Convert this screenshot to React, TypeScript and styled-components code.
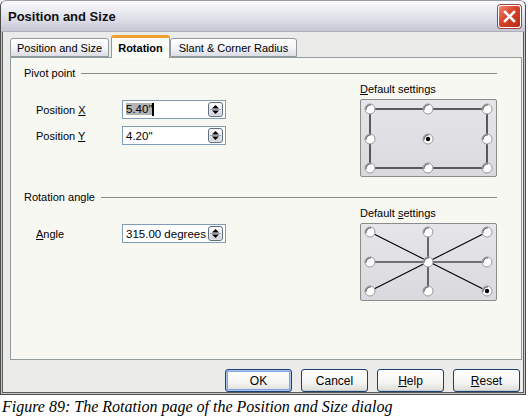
import React from "react";
import styled, { createGlobalStyle } from "styled-components";

const Global = createGlobalStyle`
  html, body { margin: 0; padding: 0; background: #ffffff; }
  body { font-family: "Liberation Sans", Arial, sans-serif; font-size: 11px; color: #000; }
  * { box-sizing: border-box; }
`;

const Page = styled.div`
  width: 530px;
  height: 420px;
  display: flex;
  flex-direction: column;
  background: #fff;
`;

const Window = styled.div`
  width: 526px;
  height: 395px;
  display: flex;
  flex-direction: column;
  border: 1px solid #4a4a4a;
  border-top-color: #9a9aa6;
  border-radius: 6px 6px 0 0;
  background: #ebebe9;
  box-shadow: inset 0 0 0 1px #c8c8cc, inset 0 0 0 2px #5a5a5a;
  overflow: hidden;
`;

const TitleBar = styled.div`
  height: 31px;
  flex: none;
  display: flex;
  align-items: center;
  justify-content: space-between;
  padding: 0 4px 0 7px;
  background: linear-gradient(#fbfbfd 0%, #eaeaf1 35%, #d9d9e4 70%, #c6c6d4 100%);
  border-bottom: 1px solid #b0b0bc;
`;

const Title = styled.span`
  font-family: "Liberation Sans", Arial, sans-serif;
  font-weight: bold;
  font-size: 13px;
  color: #111;
`;

const CloseButton = styled.div`
  width: 23px;
  height: 23px;
  border-radius: 3px;
  border: 1px solid #ffffff;
  box-shadow: 0 0 0 1px #a04040;
  background: linear-gradient(135deg, #f08a70 0%, #d8432a 45%, #b62814 100%);
  display: flex;
  align-items: center;
  justify-content: center;
`;

const Body = styled.div`
  flex: 1;
  display: flex;
  flex-direction: column;
  padding: 3px 4px 0 9px;
`;

const TabRow = styled.div`
  display: flex;
  align-items: flex-end;
  height: 22px;
  position: relative;
  z-index: 1;
`;

const Tab = styled.div<{ $active?: boolean; $w: number }>`
  width: ${(p) => p.$w}px;
  height: ${(p) => (p.$active ? 23 : 19)}px;
  margin-bottom: ${(p) => (p.$active ? -1 : 0)}px;
  margin-left: ${(p) => (p.$active ? 2 : 0)}px;
  display: flex;
  align-items: center;
  justify-content: center;
  font-size: 11px;
  font-weight: ${(p) => (p.$active ? "bold" : "normal")};
  border: 1px solid #919b9c;
  border-bottom: ${(p) => (p.$active ? "none" : "1px solid #919b9c")};
  border-radius: 3px 3px 0 0;
  background: ${(p) =>
    p.$active ? "#fbfbf8" : "linear-gradient(#ffffff 0%, #f5f5f7 50%, #dcdce6 100%)"};
  border-top: ${(p) => (p.$active ? "3px solid #f0a030" : "1px solid #919b9c")};
  padding-top: ${(p) => (p.$active ? 0 : 1)}px;
`;

const Panel = styled.div`
  height: 303px;
  width: 512px;
  border: 1px solid #919b9c;
  background: #f8f8f3;
  padding: 8px 13px 0 13px;
  display: grid;
  grid-template-columns: 336px 137px;
  grid-auto-rows: min-content;
`;

const SectionHeader = styled.div<{ $top?: number }>`
  grid-column: 1 / -1;
  display: flex;
  align-items: center;
  gap: 6px;
  height: 14px;
  margin-top: ${(p) => p.$top ?? 0}px;
  &::after {
    content: "";
    flex: 1;
    height: 1px;
    background: #8a8a8a;
  }
`;

const Fields = styled.div`
  display: flex;
  flex-direction: column;
  gap: 7px;
  padding: 20px 0 0 12px;
`;

const FieldRow = styled.div`
  display: flex;
  align-items: center;
  height: 19px;
`;

const FieldLabel = styled.span`
  width: 86px;
`;

const Input = styled.div`
  width: 104px;
  height: 19px;
  border: 1px solid #7f9db9;
  background: #fff;
  display: flex;
  align-items: center;
  justify-content: space-between;
  padding: 0 2px 0 3px;
`;

const Value = styled.span`
  font-size: 11.5px;
  white-space: nowrap;
  flex: none;
`;

const Selected = styled.span`
  background: #b4b4b4;
`;

const Caret = styled.span`
  display: inline-block;
  width: 2px;
  height: 13px;
  background: #000;
  vertical-align: middle;
`;

const Spin = styled.div`
  width: 15px;
  height: 15px;
  flex: none;
  display: flex;
`;

const Side = styled.div`
  display: flex;
  flex-direction: column;
  gap: 3px;
  padding-top: 2px;
`;

const SideLabel = styled.span`
  height: 14px;
  line-height: 14px;
`;

const PointBox = styled.div`
  width: 137px;
  height: 78px;
  border: 1px solid #8c8c8c;
  border-radius: 2px;
  background: linear-gradient(#e6e6ea, #d9d9de);
  display: flex;
`;

const ButtonRow = styled.div`
  display: flex;
  justify-content: flex-end;
  gap: 9px;
  padding: 9px 1px 0 0;
`;

const Button = styled.div<{ $default?: boolean }>`
  width: 67px;
  height: 23px;
  border: 1px solid #1c3f74;
  border-radius: 3px;
  background: linear-gradient(#ffffff 0%, #f4f4f2 60%, #dcdcd8 100%);
  box-shadow: ${(p) =>
    p.$default ? "inset 0 0 0 1px #a8c4ef, inset 0 0 0 2px #7ea4e0" : "inset 0 -1px 0 #c8c8c4"};
  display: flex;
  align-items: center;
  justify-content: center;
  font-size: 12px;
`;

const Caption = styled.div`
  font-family: "Liberation Serif", "Times New Roman", serif;
  font-style: italic;
  font-size: 16px;
  padding: 3px 0 0 2px;
`;

const U = styled.span`
  text-decoration: underline;
`;

const Spinner = () => (
  <Spin>
    <svg width="15" height="15" viewBox="0 0 15 15">
      <defs>
        <linearGradient id="g" x1="0" y1="0" x2="0" y2="1">
          <stop offset="0" stopColor="#ffffff" />
          <stop offset="1" stopColor="#cfd2da" />
        </linearGradient>
      </defs>
      <rect x="0.5" y="0.5" width="14" height="14" rx="2.5" fill="#ececf0" stroke="#5f6f80" />
      <rect x="1.5" y="1.5" width="12" height="12" rx="1.5" fill="url(#g)" />
      <line x1="2" y1="7.5" x2="13" y2="7.5" stroke="#8090a0" strokeWidth="0.8" />
      <path d="M7.5 3 L11 6.5 L4 6.5 Z" fill="#000" />
      <path d="M4 8.5 L11 8.5 L7.5 12 Z" fill="#000" />
    </svg>
  </Spin>
);

type Pt = [number, number];
const radio = (c: Pt, sel: boolean, key: string) => (
  <g key={key}>
    <circle cx={c[0]} cy={c[1]} r="5" fill="#ffffff" stroke="#9a9a9a" strokeWidth="1" />
    <path
      d={`M${c[0] - 4} ${c[1] + 1} A4.5 4.5 0 0 1 ${c[0] + 1} ${c[1] - 4}`}
      fill="none"
      stroke="#6a6a6a"
      strokeWidth="1.2"
    />
    {sel && <circle cx={c[0]} cy={c[1]} r="2.2" fill="#000" />}
  </g>
);

const xs = [9, 67, 126];
const ys = [9, 39, 68];

const PivotGrid = () => {
  const pts: Pt[] = [];
  ys.forEach((y) => xs.forEach((x) => pts.push([x, y])));
  return (
    <svg width="135" height="76" viewBox="0 0 135 76">
      <rect x={xs[0]} y={ys[0]} width={xs[2] - xs[0]} height={ys[2] - ys[0]} fill="none" stroke="#000" strokeWidth="1.2" />
      {pts.map((p, i) => radio(p, i === 4, "p" + i))}
    </svg>
  );
};

const AngleGrid = () => {
  const ys2 = [8, 38, 67];
  const pts: Pt[] = [];
  ys2.forEach((y) => xs.forEach((x) => pts.push([x, y])));
  return (
    <svg width="135" height="76" viewBox="0 0 135 76">
      <g stroke="#000" strokeWidth="1.1">
        <line x1={xs[0]} y1={ys2[0]} x2={xs[2]} y2={ys2[2]} />
        <line x1={xs[2]} y1={ys2[0]} x2={xs[0]} y2={ys2[2]} />
        <line x1={xs[0]} y1={ys2[1]} x2={xs[2]} y2={ys2[1]} />
        <line x1={xs[1]} y1={ys2[0]} x2={xs[1]} y2={ys2[2]} />
      </g>
      {pts.map((p, i) => radio(p, i === 8, "a" + i))}
    </svg>
  );
};

export default function App() {
  return (
    <Page>
      <Global />
      <Window>
        <TitleBar>
          <Title>Position and Size</Title>
          <CloseButton>
            <svg width="13" height="13" viewBox="0 0 13 13">
              <path d="M2 2 L11 11 M11 2 L2 11" stroke="#fff" strokeWidth="2.6" strokeLinecap="square" />
            </svg>
          </CloseButton>
        </TitleBar>
        <Body>
          <TabRow>
            <Tab $w={99}>Position and Size</Tab>
            <Tab $w={59} $active>
              Rotation
            </Tab>
            <Tab $w={127}>Slant &amp; Corner Radius</Tab>
          </TabRow>
          <Panel>
            <SectionHeader>Pivot point</SectionHeader>
            <Fields>
              <FieldRow>
                <FieldLabel>
                  Position <U>X</U>
                </FieldLabel>
                <Input>
                  <Value>
                    <Selected>5.40"</Selected>
                    <Caret />
                  </Value>
                  <Spinner />
                </Input>
              </FieldRow>
              <FieldRow>
                <FieldLabel>
                  Position <U>Y</U>
                </FieldLabel>
                <Input>
                  <Value>4.20"</Value>
                  <Spinner />
                </Input>
              </FieldRow>
            </Fields>
            <Side>
              <SideLabel>
                <U>D</U>efault settings
              </SideLabel>
              <PointBox>
                <PivotGrid />
              </PointBox>
            </Side>
            <SectionHeader $top={13}>Rotation angle</SectionHeader>
            <Fields>
              <FieldRow>
                <FieldLabel>
                  <U>A</U>ngle
                </FieldLabel>
                <Input>
                  <Value>315.00 degrees</Value>
                  <Spinner />
                </Input>
              </FieldRow>
            </Fields>
            <Side>
              <SideLabel>
                Default <U>s</U>ettings
              </SideLabel>
              <PointBox>
                <AngleGrid />
              </PointBox>
            </Side>
          </Panel>
          <ButtonRow>
            <Button $default>OK</Button>
            <Button>Cancel</Button>
            <Button>
              <U>H</U>elp
            </Button>
            <Button>
              <U>R</U>eset
            </Button>
          </ButtonRow>
        </Body>
      </Window>
      <Caption>Figure 89: The Rotation page of the Position and Size dialog</Caption>
    </Page>
  );
}
